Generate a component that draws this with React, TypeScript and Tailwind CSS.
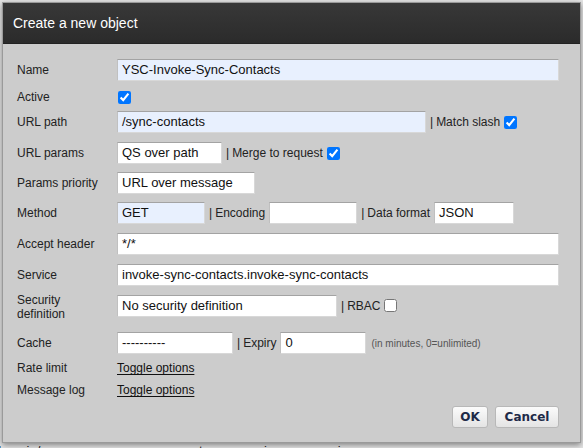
import type { ReactNode } from 'react';

const FONT = "font-['Liberation_Sans',Arial,sans-serif]";

interface RowProps {
  label: ReactNode;
  children: ReactNode;
  className?: string;
}

function Row({ label, children, className = '' }: RowProps) {
  return (
    <div className={`flex items-center ${className}`}>
      <div className="w-[100px] shrink-0 text-[12px] leading-[14px] text-[#222]">{label}</div>
      <div className="flex items-center">{children}</div>
    </div>
  );
}

function Field({ value, width, blue }: { value: string; width: string; blue?: boolean }) {
  return (
    <div
      className={`${width} h-[22px] flex items-center px-[4px] text-[13px] text-[#111] border border-[#d8d8d8] border-t-[#a3a3a3] border-l-[#c0c0c0] whitespace-nowrap overflow-hidden ${
        blue ? 'bg-[#e8f0fe]' : 'bg-white'
      }`}
    >
      {value}
    </div>
  );
}

function Sep({ text }: { text: string }) {
  return (
    <span className="mx-[4px] text-[12px] text-[#222] whitespace-nowrap">
      <span className="mr-[3px]">|</span>
      {text}
    </span>
  );
}

function Check({ checked }: { checked?: boolean }) {
  return (
    <input
      type="checkbox"
      defaultChecked={checked}
      className="w-[13px] h-[13px] m-0 accent-[#0075ff]"
    />
  );
}

function Toggle() {
  return <span className="text-[12px] text-[#111] underline underline-offset-2">Toggle options</span>;
}

export default function App() {
  return (
    <div className={`relative w-[583px] h-[448px] overflow-hidden bg-[#e6e6e6] ${FONT}`}>
      {/* page behind the modal */}
      <div className="absolute left-0 top-[441px] w-full flex text-[13px] text-[#222] whitespace-nowrap">
        <span className="ml-[-6px]">domain/names</span>
        <span className="ml-[106px]">zato sso session-ann session-ann-names</span>
        <span className="ml-[66px]">ııı</span>
        <span className="ml-[46px]">ııı</span>
      </div>

      <div className="absolute left-[2px] top-[2px] w-[579px] h-[441px] border border-[#9a9a9a] bg-[#cccccc] shadow-[0_2px_6px_rgba(0,0,0,0.45)] flex flex-col">
        <div className="h-[41px] shrink-0 bg-gradient-to-b from-[#383838] to-[#2b2b2b] border-b border-[#222] flex items-center pl-[10px]">
          <span className="text-[14px] text-white">Create a new object</span>
        </div>

        <div className="flex flex-col pl-[14px] pr-[21px] pt-[15px]">
          <Row label="Name">
            <Field value="YSC-Invoke-Sync-Contacts" width="w-[442px]" blue />
          </Row>
          <Row label="Active" className="mt-[5px] h-[22px]">
            <span className="ml-[1px] flex">
              <Check checked />
            </span>
          </Row>
          <Row label="URL path" className="mt-[3px]">
            <Field value="/sync-contacts" width="w-[309px]" blue />
            <Sep text="Match slash" />
            <Check checked />
          </Row>
          <Row label="URL params" className="mt-[9px]">
            <Field value="QS over path" width="w-[105px]" />
            <Sep text="Merge to request" />
            <Check checked />
          </Row>
          <Row label="Params priority" className="mt-[8px]">
            <Field value="URL over message" width="w-[138px]" />
          </Row>
          <Row label="Method" className="mt-[8px]">
            <Field value="GET" width="w-[88px]" blue />
            <Sep text="Encoding" />
            <Field value="" width="w-[88px]" />
            <Sep text="Data format" />
            <Field value="JSON" width="w-[80px]" />
          </Row>
          <Row label="Accept header" className="mt-[9px]">
            <Field value="*/*" width="w-[442px]" />
          </Row>
          <Row label="Service" className="mt-[9px]">
            <Field value="invoke-sync-contacts.invoke-sync-contacts" width="w-[442px]" />
          </Row>
          <Row
            label={
              <span className="block pt-[3px]">
                Security
                <br />
                definition
              </span>
            }
            className="mt-[4px]"
          >
            <Field value="No security definition" width="w-[220px]" />
            <Sep text="RBAC" />
            <Check />
          </Row>
          <Row label="Cache" className="mt-[11px]">
            <Field value="----------" width="w-[116px]" />
            <Sep text="Expiry" />
            <Field value="0" width="w-[86px]" />
            <span className="ml-[5px] text-[10px] text-[#555] whitespace-nowrap">(in minutes, 0=unlimited)</span>
          </Row>
          <Row label="Rate limit" className="mt-[3px] h-[22px]">
            <Toggle />
          </Row>
          <Row label="Message log" className="h-[22px]">
            <Toggle />
          </Row>

          <div className="mt-[5px] flex justify-end gap-[7px] font-['DejaVu_Sans',sans-serif]">
            <button className="w-[36px] h-[22px] rounded-[3px] border border-[#b8b8b8] bg-gradient-to-b from-[#fbfbfb] to-[#e4e4e4] text-[12px] font-bold text-[#1e2a48]">
              OK
            </button>
            <button className="w-[64px] h-[22px] rounded-[3px] border border-[#b8b8b8] bg-gradient-to-b from-[#fbfbfb] to-[#e4e4e4] text-[12px] font-bold text-[#1e2a48]">
              Cancel
            </button>
          </div>
        </div>
      </div>
    </div>
  );
}
